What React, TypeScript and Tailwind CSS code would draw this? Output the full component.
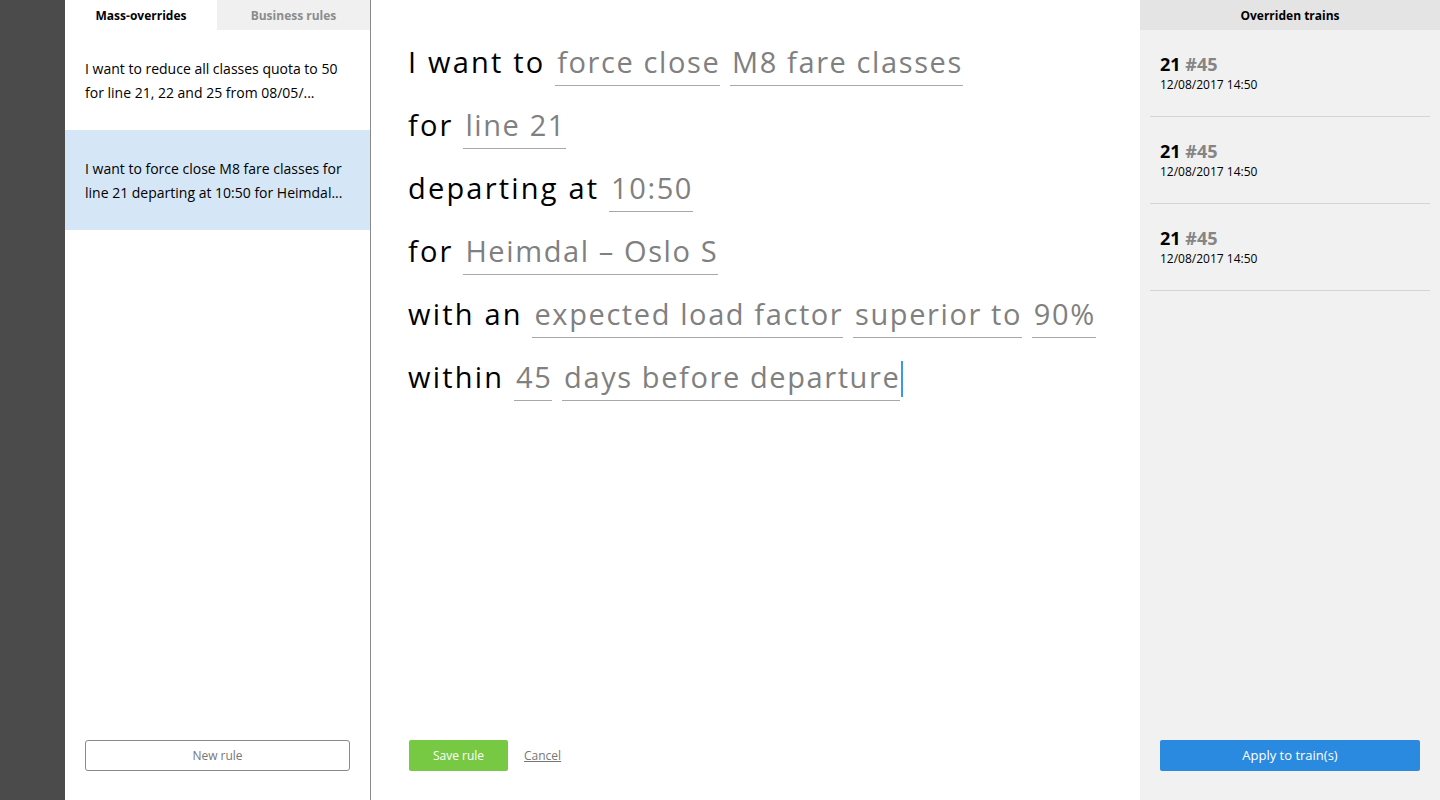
import { ReactNode } from 'react';

const rules = [
  { text: 'I want to reduce all classes quota to 50 for line 21, 22 and 25 from 08/05/...', active: false },
  { text: 'I want to force close M8 fare classes for line 21 departing at 10:50 for Heimdal...', active: true },
];

const trains = [1, 2, 3];

function Field({ children, caret }: { children: ReactNode; caret?: boolean }) {
  return (
    <span className="relative inline-block border-b border-[#a8a8a8] pb-[5px] pl-[2px] leading-[36px] tracking-[1.6px] text-[#808080]">
      {children}
      {caret && <span className="absolute right-[-3px] top-[2px] h-[36px] w-[2px] bg-[#3a9ae8]" />}
    </span>
  );
}

export default function App() {
  return (
    <div className="flex h-[800px] w-[1440px] overflow-hidden bg-white" style={{ fontFamily: '"Open Sans", "Noto Sans", sans-serif' }}>
      <div className="w-[65px] shrink-0 bg-[#4b4b4b]" />

      {/* Rules list */}
      <div className="flex w-[306px] shrink-0 flex-col border-r border-[#8a8a8a]">
        <div className="flex h-[30px] text-[12px] font-bold leading-[32px]">
          <div className="flex w-[152px] items-center justify-center pt-px text-black">Mass-overrides</div>
          <div className="flex flex-1 items-center justify-center bg-[#f0f0f0] pt-px text-[#8c8c8c]">Business rules</div>
        </div>
        {rules.map((r, i) => (
          <div key={i} className={`flex h-[100px] items-center px-5 pt-[2px] text-[14px] leading-[24px] text-black ${r.active ? 'bg-[#d5e7f7]' : ''}`}>
            {r.text}
          </div>
        ))}
        <div className="flex-1" />
        <div className="px-5 pb-[29px]">
          <button className="h-[31px] w-full rounded-[3px] border border-[#8a8a8a] text-[12px] text-[#777]">New rule</button>
        </div>
      </div>

      {/* Editor */}
      <div className="flex flex-1 flex-col pl-[37px] pr-[20px] pt-[30px]">
        <div className="whitespace-nowrap text-[29px] leading-[63px] tracking-[2.2px] text-black">
          <div>I want to <Field>force close</Field> <Field>M8 fare classes</Field></div>
          <div>for <Field>line 21</Field></div>
          <div>departing at <Field>10:50</Field></div>
          <div>for <Field>Heimdal – Oslo S</Field></div>
          <div>with an <Field>expected load factor</Field> <Field>superior to</Field> <Field>90%</Field></div>
          <div>within <Field>45</Field> <Field caret>days before departure</Field></div>
        </div>
        <div className="flex-1" />
        <div className="flex items-center gap-4 pb-[29px] pl-px">
          <button className="h-[31px] w-[99px] rounded-[2px] bg-[#77c943] text-[12px] text-white">Save rule</button>
          <button className="text-[12px] text-[#777] underline">Cancel</button>
        </div>
      </div>

      {/* Overriden trains */}
      <div className="flex w-[300px] shrink-0 flex-col bg-[#f1f1f1]">
        <div className="flex h-[30px] items-center justify-center bg-[#e4e4e4] pt-[2px] text-[12px] font-bold text-black">Overriden trains</div>
        <div className="px-[10px]">
          {trains.map((t) => (
            <div key={t} className="h-[87px] border-b border-[#d4d4d4] px-[10px] pt-[23px]">
              <div className="text-[18px] font-bold leading-[22px] text-black">
                21 <span className="text-[#858585]">#45</span>
              </div>
              <div className="mt-[1px] text-[12px] leading-[18px] text-black">12/08/2017 14:50</div>
            </div>
          ))}
        </div>
        <div className="flex-1" />
        <div className="px-5 pb-[29px]">
          <button className="h-[31px] w-full rounded-[2px] bg-[#2a8ae0] text-[13px] text-white">Apply to train(s)</button>
        </div>
      </div>
    </div>
  );
}
